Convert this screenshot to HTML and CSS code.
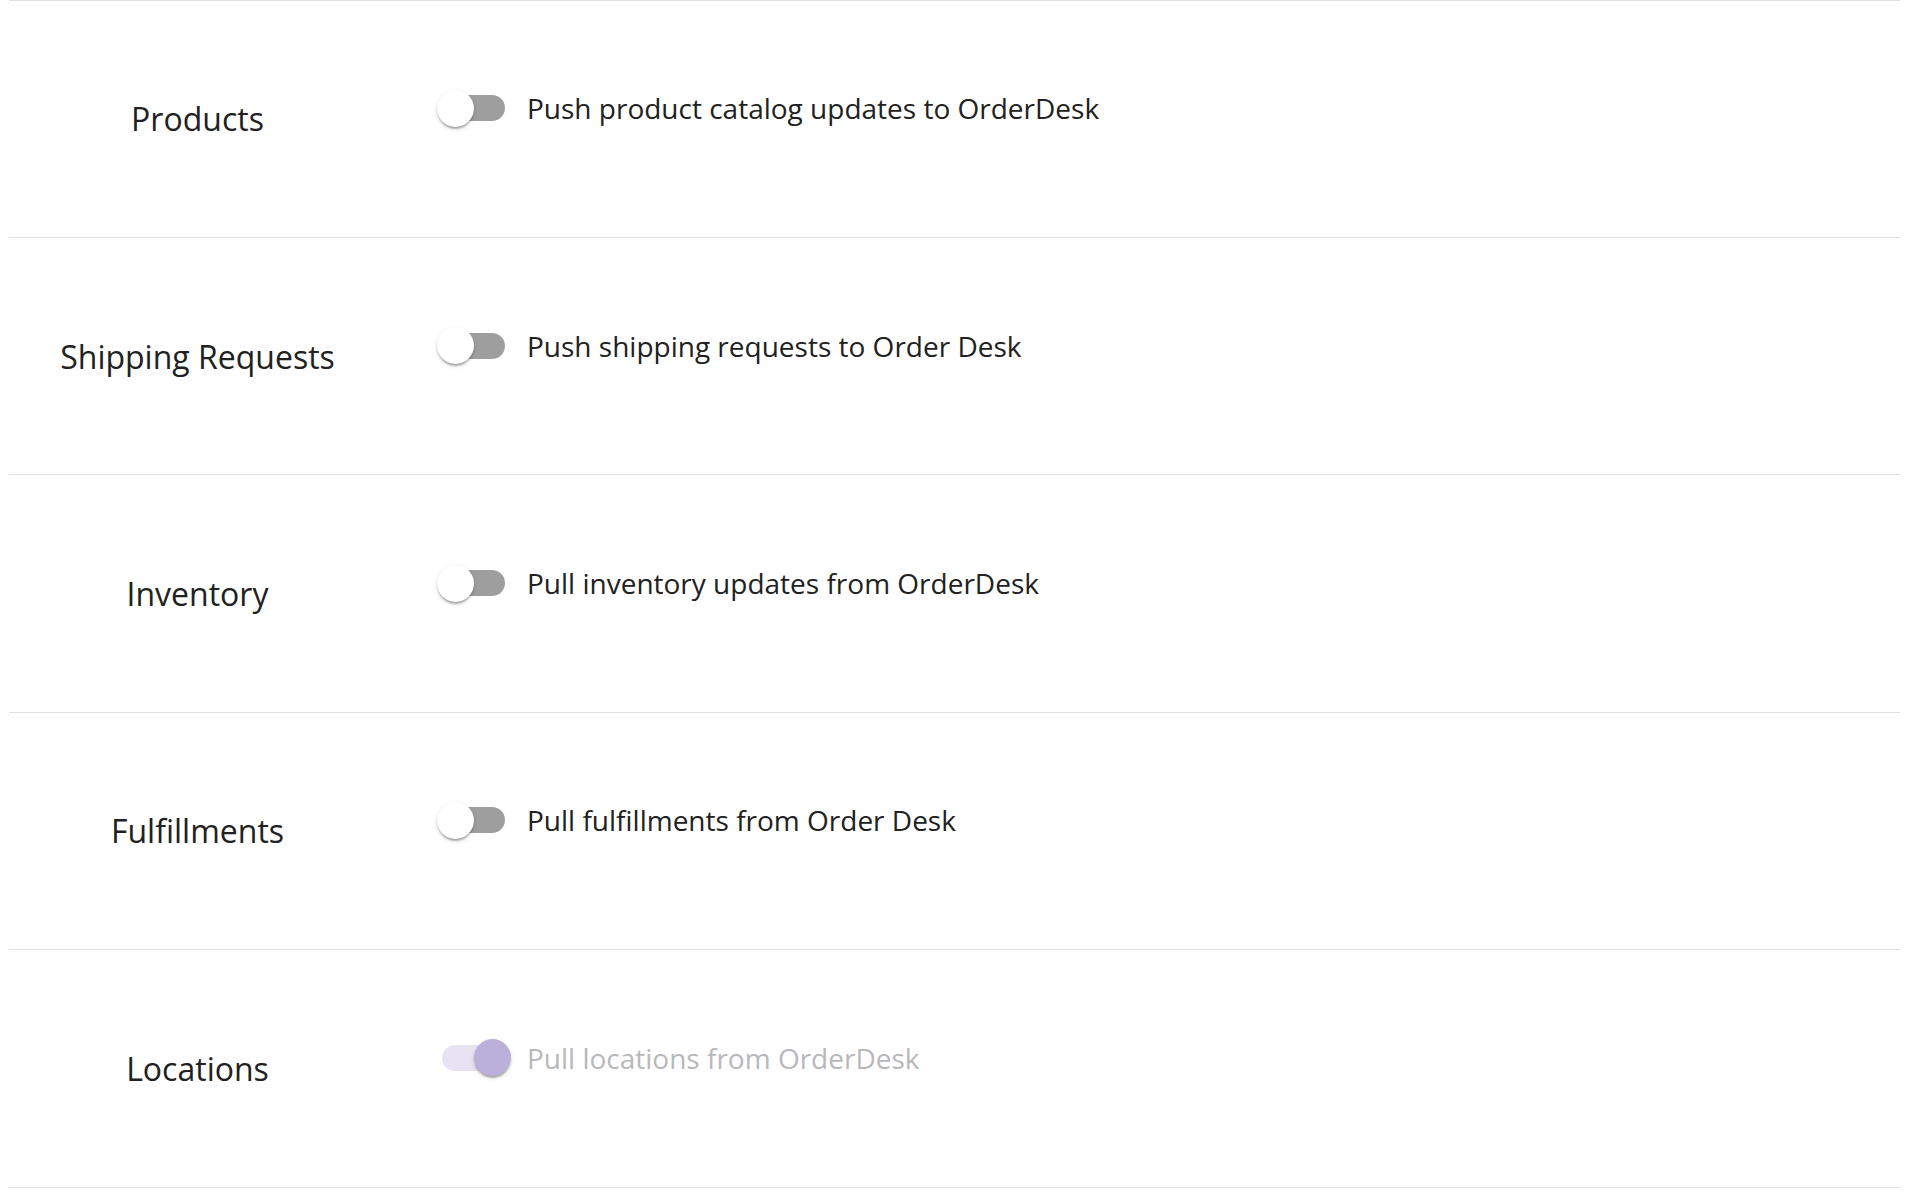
FILE: index.html
```html
<!DOCTYPE html>
<html lang="en">

<head>
    <title>OrderDesk Settings</title>
    <link rel="stylesheet" href="styles.css">
</head>

<body>
    <div class="settings">
        <div class="setting-row">
            <div class="setting-label">Products</div>
            <div class="setting-control">
                <label class="switch-label">
                    <span class="switch"><span class="switch-track"></span><span class="switch-thumb"></span></span>
                    <span class="switch-text">Push product catalog updates to OrderDesk</span>
                </label>
            </div>
        </div>

        <div class="setting-row">
            <div class="setting-label">Shipping Requests</div>
            <div class="setting-control">
                <label class="switch-label">
                    <span class="switch"><span class="switch-track"></span><span class="switch-thumb"></span></span>
                    <span class="switch-text">Push shipping requests to Order Desk</span>
                </label>
            </div>
        </div>

        <div class="setting-row">
            <div class="setting-label">Inventory</div>
            <div class="setting-control">
                <label class="switch-label">
                    <span class="switch"><span class="switch-track"></span><span class="switch-thumb"></span></span>
                    <span class="switch-text">Pull inventory updates from OrderDesk</span>
                </label>
            </div>
        </div>

        <div class="setting-row">
            <div class="setting-label">Fulfillments</div>
            <div class="setting-control">
                <label class="switch-label">
                    <span class="switch"><span class="switch-track"></span><span class="switch-thumb"></span></span>
                    <span class="switch-text">Pull fulfillments from Order Desk</span>
                </label>
            </div>
        </div>

        <div class="setting-row">
            <div class="setting-label">Locations</div>
            <div class="setting-control">
                <label class="switch-label disabled">
                    <span class="switch checked"><span class="switch-track"></span><span class="switch-thumb"></span></span>
                    <span class="switch-text">Pull locations from OrderDesk</span>
                </label>
            </div>
        </div>
    </div>
</body>

</html>
```

FILE: styles.css
```css
body {
    margin: 0;
    font-family: 'Open Sans', sans-serif;
    color: #212121;
    background-color: #fff;
}

.settings {
    margin: -0.4px 22px 0 9px;
    border-top: 1px solid #e0e0e0;
}

.setting-row {
    display: flex;
    align-items: center;
    height: 236.4px;
    border-bottom: 1px solid #e0e0e0;
}

.setting-label {
    width: 377px;
    text-align: center;
    font-size: 32px;
}

.setting-control {
    flex: 1;
    padding-left: 51px;
    padding-bottom: 21px;
}

.switch-label {
    display: flex;
    align-items: center;
    gap: 19px;
    cursor: pointer;
}

.switch {
    position: relative;
    width: 71px;
    height: 37px;
    flex-shrink: 0;
}

.switch-track {
    position: absolute;
    left: 5px;
    top: 5.5px;
    width: 63px;
    height: 26px;
    border-radius: 13px;
    background-color: #9e9e9e;
}

.switch-thumb {
    position: absolute;
    left: 0;
    top: 0;
    width: 37px;
    height: 37px;
    border-radius: 50%;
    background-color: #fff;
    box-shadow: 0 3.5px 2px -2px rgba(0, 0, 0, 0.2), 0 2px 2px 0 rgba(0, 0, 0, 0.14), 0 2px 5.5px 0 rgba(0, 0, 0, 0.12);
}

.switch.checked .switch-thumb {
    left: 37px;
}

.switch-text {
    font-size: 28px;
}

.disabled {
    cursor: default;
}

.disabled .switch-track {
    background-color: #e7e3f3;
}

.disabled .switch-thumb {
    background-color: #bab0d9;
}

.disabled .switch-text {
    color: #b8b8bc;
}
```
